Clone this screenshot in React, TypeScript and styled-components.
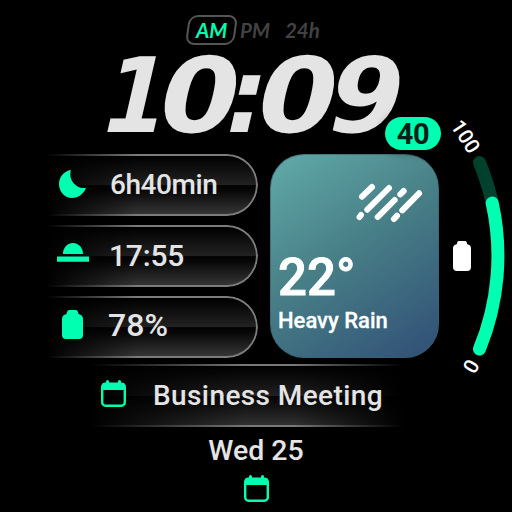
import React from "react";
import styled, { createGlobalStyle } from "styled-components";

const MINT = "#00ffb0";
const INK = "#e4e4e4";

const GlobalStyle = createGlobalStyle`
  *, *::before, *::after { box-sizing: border-box; }
  body { margin: 0; background: #000; }
  svg { display: block; overflow: visible; }
`;

const Face = styled.main`
  width: 512px;
  height: 512px;
  overflow: hidden;
  display: flex;
  flex-direction: column;
  background: #000;
  color: ${INK};
  font-family: Roboto, "Liberation Sans", sans-serif;
  font-weight: 500;
  white-space: nowrap;
`;

const Modes = styled.header`
  height: 45px;
  padding: 15px 0 0 187px;
  display: flex;
  align-items: center;
  font: italic 700 20.5px/30px Lato, sans-serif;
  color: #424242;
`;

const ActiveMode = styled.span`
  width: 49px;
  height: 30px;
  border: 2px solid #555;
  border-radius: 9px;
  transform: skewX(-8deg);
  display: grid;
  place-items: center;
`;

const ModeText = styled.span<{ $active?: boolean; $gap?: number }>`
  color: ${(p) => (p.$active ? MINT : "inherit")};
  transform: ${(p) => (p.$active ? "skewX(8deg)" : "none")};
  margin-left: ${(p) => p.$gap ?? 0}px;
  font-weight: 700;
  line-height: 26px;
`;

const Clock = styled.div`
  position: relative;
  height: 109px;
  padding: 11px 0 0 106px;
  display: flex;
`;

const Digit = styled.span<{ $width: number; $stretch: number }>`
  width: ${(p) => p.$width}px;
  height: 80px;
  display: flex;
  justify-content: center;
  font: bold 104px/81px "DejaVu Sans", sans-serif;
  transform: skewX(-13deg) scaleX(${(p) => p.$stretch});
`;

const Seconds = styled.span`
  position: absolute;
  left: 385px;
  top: 72px;
  width: 56px;
  height: 33px;
  border-radius: 17px;
  background: ${MINT};
  color: #032018;
  box-shadow: 0 0 9px 3px rgba(0, 0, 0, 0.4);
  font-size: 29px;
  letter-spacing: -0.5px;
  font-weight: 700;
  line-height: 35px;
  text-align: center;
`;

const Widgets = styled.section`
  height: 204px;
  display: grid;
  grid-template-columns: 258px 12px 169px 73px;
`;

const Stats = styled.div`
  padding-left: 40px;
  display: flex;
  flex-direction: column;
  gap: 8.5px;
`;

const Pill = styled.div`
  position: relative;
  height: 62.3px;
  display: grid;
  grid-template-columns: 65px 1fr;
  align-items: center;
  isolation: isolate;

  &::before {
    content: "";
    position: absolute;
    inset: 0;
    z-index: -1;
    border: 2px solid #7c7c7c;
    border-left: 0;
    border-radius: 0 31px 31px 0;
    background: linear-gradient(#000 0%, #222 50%, #020202 51%, #080808 60%, #353535 100%);
    mask-image: linear-gradient(90deg, transparent 3%, #000 45%);
  }
`;

const IconSlot = styled.span<{ $lift?: number }>`
  display: grid;
  place-items: center;
  padding-bottom: ${(p) => (p.$lift ?? 0) * 2}px;
`;

const Value = styled.span<{ $size?: number; $track?: number; $indent?: number; $lift?: number }>`
  font-size: ${(p) => p.$size ?? 28}px;
  letter-spacing: ${(p) => p.$track ?? 0}px;
  padding-left: ${(p) => p.$indent ?? 4}px;
  padding-bottom: ${(p) => (p.$lift ?? 0) * 2}px;
  line-height: 32px;
`;

const Weather = styled.article`
  grid-column: 3;
  height: 204px;
  border-radius: 34px;
  border: 1px solid rgba(55, 100, 110, 0.7);
  background: linear-gradient(145deg, #62abaa 0%, #488087 45%, #304e76 100%) border-box;
  color: #fff;
  padding: 29px 7px 0;
`;

const RainIcon = styled.svg`
  margin-left: 79px;
  width: 67px;
  height: 40px;
`;

const Temperature = styled.div`
  margin-top: 27px;
  font-size: 51px;
  line-height: 54px;
  -webkit-text-stroke: 0.9px #fff;
`;

const Condition = styled.div`
  margin-top: 2px;
  font-size: 22px;
  line-height: 28px;
  -webkit-text-stroke: 0.3px #fff;
`;

const Gauge = styled.svg`
  width: 73px;
  height: 204px;
  font-family: Roboto, sans-serif;
  font-size: 20.5px;
  font-weight: 500;
`;

const EventBar = styled.section`
  position: relative;
  margin: 6px 102px 0 80px;
  height: 63px;
  display: grid;
  grid-template-columns: 67px 1fr;
  align-items: center;
  isolation: isolate;

  &::before {
    content: "";
    position: absolute;
    inset: 0;
    z-index: -1;
    border: solid #777;
    border-width: 2px 0;
    background: linear-gradient(#000 0%, #202020 50%, #040404 51%, #303030 100%);
    mask-image: linear-gradient(90deg, transparent 3%, #000 50%, #000 65%, transparent 98%);
  }
`;

const Today = styled.footer`
  display: flex;
  flex-direction: column;
  align-items: center;
  padding-top: 8px;
  gap: 8px;
  font-size: 28.5px;
  line-height: 32px;
`;

const Battery = () => (
  <svg width="21" height="29" viewBox="0 0 21 29" fill={MINT}>
    <path d="M7.5 0h6q2 0 2.5 2l.5 2q4.500 1 4.500 5v16q0 4-4 4H4q-4 0-4-4V9q0-4 4.500-5l.5-2q.5-2 2.500-2Z" />
  </svg>
);

const Moon = () => (
  <svg width="27" height="28" viewBox="0 0 27 28" fill={MINT}>
    <path d="M12 0C9 9 16 19 27 18C24 25 18 28 13 28C6 28 0 22 0 14C0 7 5 1 12 0Z" />
  </svg>
);

const Sunset = () => (
  <svg width="32" height="19" viewBox="0 0 32 19" fill={MINT}>
    <path d="M6 11C6 5 10 0 16 0S26 5 26 11ZM0 13.5h32v5.2H0Z" />
  </svg>
);

const Calendar = () => (
  <svg width="25" height="27" viewBox="0 0 25 27">
    <rect x="1.2" y="3.7" width="22.6" height="22" rx="3.3" fill="none" stroke={MINT} strokeWidth="2.4" />
    <path d="M1 10V5q0-2 3-2h1V1.5a1.5 1.5 0 0 1 3 0V3h9V1.5a1.5 1.5 0 0 1 3 0V3h1q3 0 3 2v5Z" fill={MINT} />
  </svg>
);

const stats = [
  { icon: <Moon />, text: "6h40min", size: 28, indent: 5, track: -0.45, iconLift: 1, lift: 0 },
  { icon: <Sunset />, text: "17:55", size: 30, indent: 4, track: -0.2, iconLift: 3, lift: 0 },
  { icon: <Battery />, text: "78%", size: 32, indent: 3, track: 0, iconLift: 2, lift: 2 },
];

export default function App() {
  return (
    <>
      <GlobalStyle />
      <Face>
        <Modes>
          <ActiveMode>
            <ModeText $active>AM</ModeText>
          </ActiveMode>
          <ModeText $gap={4}>PM</ModeText>
          <ModeText $gap={15}>24h</ModeText>
        </Modes>

        <Clock>
          <Digit $width={61} $stretch={0.87}>1</Digit>
          <Digit $width={66} $stretch={1.09}>0</Digit>
          <Digit $width={28} $stretch={0.95}>:</Digit>
          <Digit $width={74} $stretch={1.09}>0</Digit>
          <Digit $width={64} $stretch={1.02}>9</Digit>
          <Seconds>40</Seconds>
        </Clock>

        <Widgets>
          <Stats>
            {stats.map((s) => (
              <Pill key={s.text}>
                <IconSlot $lift={s.iconLift}>{s.icon}</IconSlot>
                <Value $size={s.size} $indent={s.indent} $track={s.track} $lift={s.lift}>
                  {s.text}
                </Value>
              </Pill>
            ))}
          </Stats>

          <Weather>
            <RainIcon viewBox="0 0 67 40" stroke="#fff" strokeWidth="6" strokeLinecap="round">
              <path d="M15 3L5 12.7M32 4L10.3 25.7M37.7 16L20.7 33M46.7 7L43.3 10.3M62 9.3L45.3 26.3M4 31L2.5 33M40 31.7L37 35" />
            </RainIcon>
            <Temperature>22°</Temperature>
            <Condition>Heavy Rain</Condition>
          </Weather>

          <Gauge viewBox="439 154 73 204" fill="none">
            <path d="M479.5 162.5A245.5 245.5 0 0 1 492.2 203" stroke="#00412d" strokeWidth="13" strokeLinecap="round" />
            <path d="M492.2 203A245.5 245.5 0 0 1 479.5 349" stroke={MINT} strokeWidth="13" strokeLinecap="round" />
            <text transform="translate(465.5 136.5) rotate(57)" textAnchor="middle" y="7" fill="#fff">100</text>
            <text transform="translate(471.3 366.5) rotate(-60)" textAnchor="middle" y="7" fill="#fff">0</text>
            <path transform="translate(453 241)" d="M6 0h6q2 0 2 3q4 1 4 4v19q0 4-4 4H4q-4 0-4-4V7q0-3 4-4q0-3 2-3Z" fill="#fff" />
          </Gauge>
        </Widgets>

        <EventBar>
          <IconSlot $lift={2}><Calendar /></IconSlot>
          <Value $indent={6} $track={0.4}>Business Meeting</Value>
        </EventBar>

        <Today>
          <span>Wed 25</span>
          <Calendar />
        </Today>
      </Face>
    </>
  );
}
